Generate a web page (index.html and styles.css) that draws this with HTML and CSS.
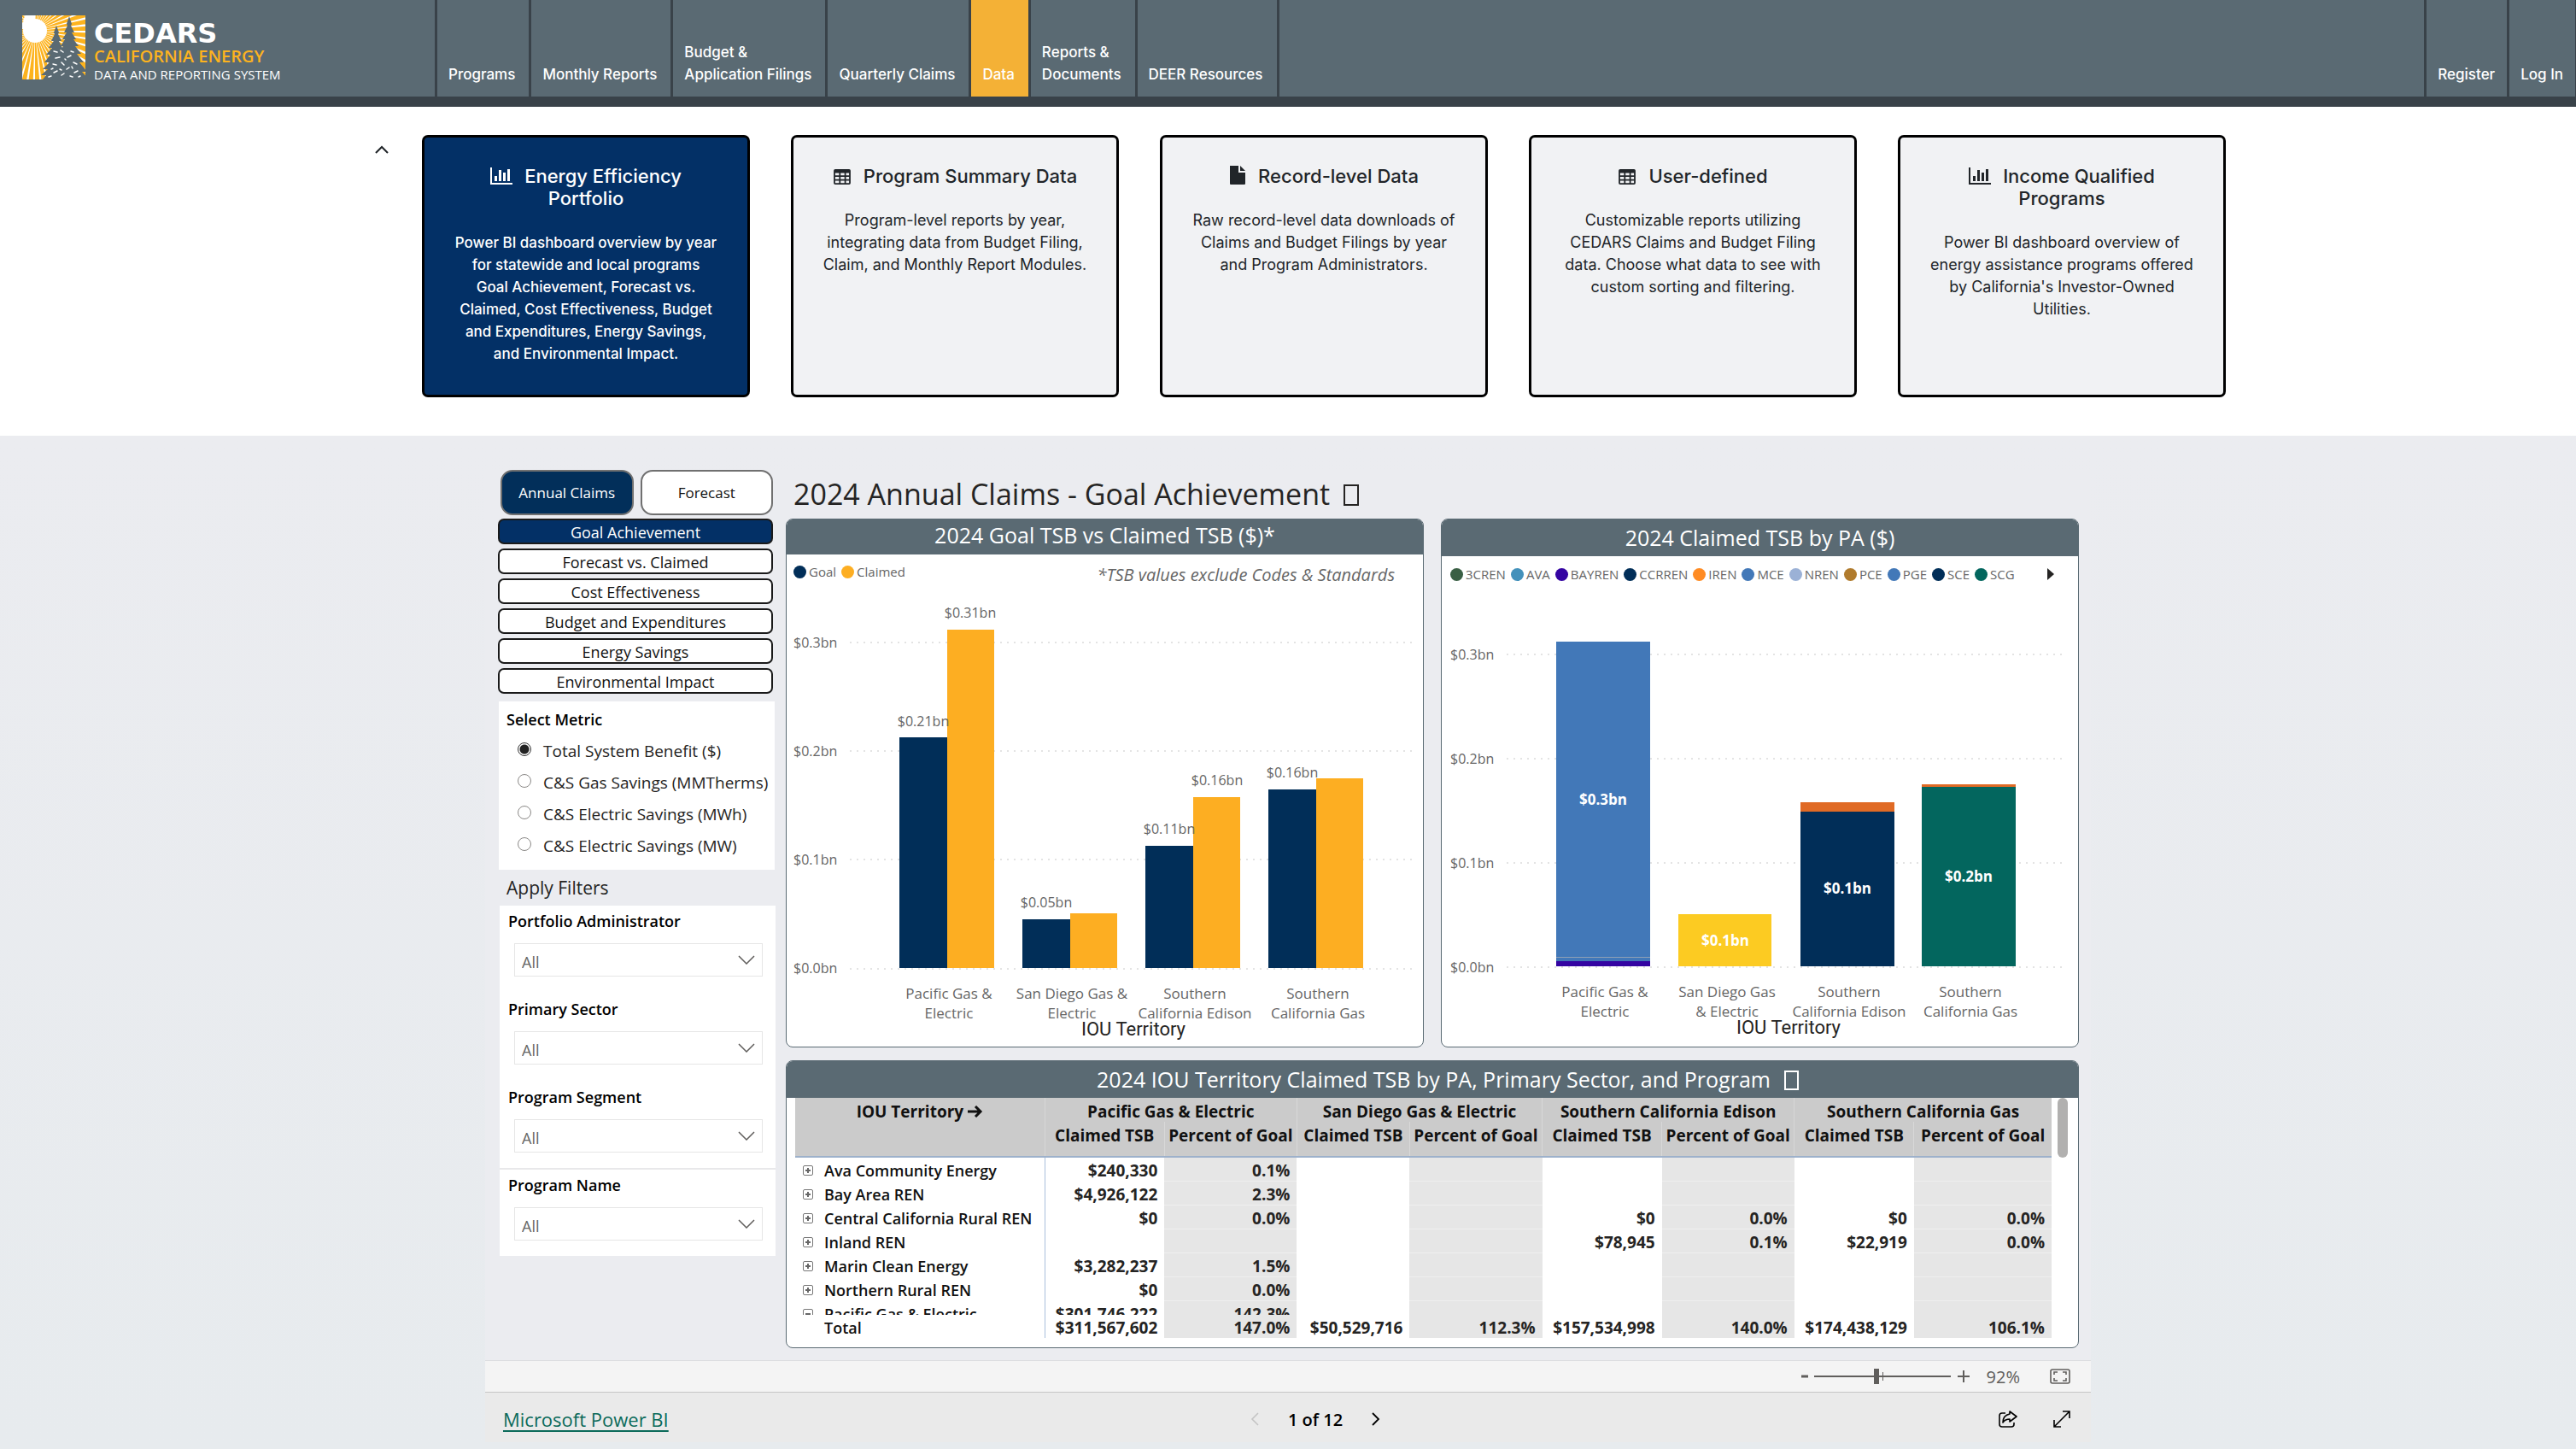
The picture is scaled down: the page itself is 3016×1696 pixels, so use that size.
FILE: index.html
```html
<!DOCTYPE html>
<html lang="en">
<head>
<meta charset="utf-8">
<meta name="viewport" content="width=device-width, initial-scale=1">
<title>CEDARS - Energy Efficiency Portfolio</title>
<link rel="stylesheet" href="styles.css">
</head>
<body>
<svg class="sprite" aria-hidden="true">
  <symbol id="i-bars" viewBox="0 0 26 20"><path d="M0 0h2v18h24v2H0z"/><path d="M5 10h3v6H5zM10 3h3v13h-3zM15 6h3v10h-3zM20 2h3v14h-3z"/></symbol>
  <symbol id="i-table" viewBox="0 0 22 20"><path fill-rule="evenodd" d="M2 0h18a2 2 0 0 1 2 2v16a2 2 0 0 1-2 2H2a2 2 0 0 1-2-2V2a2 2 0 0 1 2-2zM2 5v3h5V5zm7 0v3h5V5zm7 0v3h4V5zM2 10v3h5v-3zm7 0v3h5v-3zm7 0v3h4v-3zM2 15v3h5v-3zm7 0v3h5v-3zm7 0v3h4v-3z"/></symbol>
  <symbol id="i-file" viewBox="0 0 20 22"><path d="M1 0h10v8h8v13a1 1 0 0 1-1 1H2a1 1 0 0 1-1-1z"/><path d="M13 0l6 6h-6z"/></symbol>
</svg>

<header class="topbar">
  <a class="brand" href="#">
    <svg class="brand-mark" viewBox="0 0 74 75" aria-hidden="true">
      <defs><clipPath id="frame"><rect width="74" height="75"/></clipPath></defs>
      <g clip-path="url(#frame)">
        <rect width="74" height="75" fill="#fdb31e"/>
        <circle cx="15" cy="18" r="50" fill="none" stroke="#fff" stroke-width="100" pathLength="144" stroke-dasharray="0.9 2.1"/>
        <circle cx="15" cy="18" r="14" fill="#fff"/>
        <path fill="#5a6a73" d="M55 1l3 9-1 2 4 8-3 0 5 8-3 0 6 8-4 0 7 9-5 0 8 10-5 0 9 11-6 0 8 9H38l2-12 6-18-3 0 5-9-3 0 5-8-3 0 5-8-3 0 4-8-1-2z"/>
        <path fill="#5a6a73" d="M40 12l3 8-1 2 4 8-3 0 5 10-3 0 8 14v21H24l4-5-6 0 8-7-6 0 8-8-6 0 7-9-5 0 7-8-4 0 6-8-3 0 4-8-1-2z"/>
        <g fill="none" stroke="#fff" stroke-width="1.5" stroke-linecap="round">
          <path d="M37 42l4 1M45 41l3 2M39 50l5-1M36 57l4 1M46 55l3 3M57 42l3 1M53 49l4-2M60 55l4 2M52 63l3-2M37 67l4-2M46 70l3-2M61 67l4-2M31 72l3-1M56 71l3 1M66 72l2-1M44 63l2 1M58 60l1 2M50 51l1 1M34 63l2-1"/>
        </g>
      </g>
    </svg>
    <span class="brand-text">
      <span class="brand-name">CEDARS</span>
      <span class="brand-state">CALIFORNIA ENERGY</span>
      <span class="brand-sub">DATA AND REPORTING SYSTEM</span>
    </span>
  </a>
  <nav class="mainnav">
    <a href="#">Programs</a>
    <a href="#">Monthly Reports</a>
    <a href="#">Budget &amp;<br>Application Filings</a>
    <a href="#">Quarterly Claims</a>
    <a href="#" class="current">Data</a>
    <a href="#">Reports &amp;<br>Documents</a>
    <a href="#">DEER Resources</a>
  </nav>
  <nav class="mainnav account">
    <a href="#">Register</a>
    <a href="#">Log In</a>
  </nav>
</header>

<section class="chooser">
  <div class="chooser-inner">
    <button class="collapse" aria-label="Collapse"><svg width="16" height="10" viewBox="0 0 16 10"><path d="M1 9l7-7 7 7" fill="none" stroke="#212529" stroke-width="2"/></svg></button>
    <div class="cards">
      <a href="#" class="card active">
        <h2><svg width="26" height="20"><use href="#i-bars"/></svg>Energy Efficiency Portfolio</h2>
        <p>Power BI dashboard overview by year for statewide and local programs<br>Goal Achievement, Forecast vs. Claimed, Cost Effectiveness, Budget and Expenditures, Energy Savings, and Environmental Impact.</p>
      </a>
      <a href="#" class="card">
        <h2><svg width="22" height="18"><use href="#i-table"/></svg>Program Summary Data</h2>
        <p>Program-level reports by year, integrating data from Budget Filing, Claim, and Monthly Report Modules.</p>
      </a>
      <a href="#" class="card">
        <h2><svg width="20" height="22"><use href="#i-file"/></svg>Record-level Data</h2>
        <p>Raw record-level data downloads of Claims and Budget Filings by year and Program Administrators.</p>
      </a>
      <a href="#" class="card">
        <h2><svg width="22" height="18"><use href="#i-table"/></svg>User-defined</h2>
        <p>Customizable reports utilizing CEDARS Claims and Budget Filing data. Choose what data to see with custom sorting and filtering.</p>
      </a>
      <a href="#" class="card">
        <h2><svg width="26" height="20"><use href="#i-bars"/></svg>Income Qualified Programs</h2>
        <p>Power BI dashboard overview of energy assistance programs offered by California's Investor-Owned Utilities.</p>
      </a>
    </div>
  </div>
</section>

<main class="stage">
<div class="embed">
  <div class="report">
    <aside class="side">
      <div class="tabs">
        <button class="tab on">Annual Claims</button>
        <button class="tab">Forecast</button>
      </div>
      <div class="pages">
        <button class="page on">Goal Achievement</button>
        <button class="page">Forecast vs. Claimed</button>
        <button class="page">Cost Effectiveness</button>
        <button class="page">Budget and Expenditures</button>
        <button class="page">Energy Savings</button>
        <button class="page">Environmental Impact</button>
      </div>
      <fieldset class="metric">
        <legend>Select Metric</legend>
        <label><input type="radio" name="metric" checked>Total System Benefit ($)</label>
        <label><input type="radio" name="metric">C&amp;S Gas Savings (MMTherms)</label>
        <label><input type="radio" name="metric">C&amp;S Electric Savings (MWh)</label>
        <label><input type="radio" name="metric">C&amp;S Electric Savings (MW)</label>
      </fieldset>
      <h3 class="filters-title">Apply Filters</h3>
      <div class="filters">
        <div class="filter"><label for="f1">Portfolio Administrator</label><select id="f1"><option>All</option></select></div>
        <div class="filter"><label for="f2">Primary Sector</label><select id="f2"><option>All</option></select></div>
        <div class="filter"><label for="f3">Program Segment</label><select id="f3"><option>All</option></select></div>
        <div class="filter"><label for="f4">Program Name</label><select id="f4"><option>All</option></select></div>
      </div>
    </aside>

    <div class="content">
      <h1>2024 Annual Claims - Goal Achievement<span class="info"></span></h1>
      <div class="charts">
        <section class="panel">
          <h2 class="panel-title short">2024 Goal TSB vs Claimed TSB ($)*</h2>
          <div class="legend-row">
            <ul class="legend">
              <li><i class="navy"></i>Goal</li>
              <li><i class="amber"></i>Claimed</li>
            </ul>
            <em class="note">*TSB values exclude Codes &amp; Standards</em>
          </div>
          <svg class="chart" viewBox="0 0 745 525" role="img" aria-label="Goal and claimed TSB by territory">
            <g class="grid"><path d="M74 52H736M74 179H736M74 306H736M74 434H736"/></g>
            <g class="axis"><text x="8" y="58">$0.3bn</text><text x="8" y="185">$0.2bn</text><text x="8" y="312">$0.1bn</text><text x="8" y="439">$0.0bn</text></g>
            <g fill="#012e58"><rect x="132" y="163" width="56" height="270"/><rect x="276" y="376" width="56" height="57"/><rect x="420" y="290" width="56" height="143"/><rect x="564" y="224" width="56" height="209"/></g>
            <g fill="#fdae22"><rect x="188" y="37" width="55" height="396"/><rect x="332" y="369" width="55" height="64"/><rect x="476" y="233" width="55" height="200"/><rect x="620" y="211" width="55" height="222"/></g>
            <g class="axis mid">
              <text x="160" y="150">$0.21bn</text><text x="215" y="23">$0.31bn</text><text x="304" y="362">$0.05bn</text><text x="448" y="276">$0.11bn</text><text x="504" y="219">$0.16bn</text><text x="592" y="210">$0.16bn</text>
            </g>
            <g class="axis mid cats">
              <text x="190" y="469">Pacific Gas &amp;</text><text x="190" y="492">Electric</text>
              <text x="334" y="469">San Diego Gas &amp;</text><text x="334" y="492">Electric</text>
              <text x="478" y="469">Southern</text><text x="478" y="492">California Edison</text>
              <text x="622" y="469">Southern</text><text x="622" y="492">California Gas</text>
            </g>
            <text class="axis-title" x="406" y="512">IOU Territory</text>
          </svg>
        </section>

        <section class="panel">
          <h2 class="panel-title">2024 Claimed TSB by PA ($)</h2>
          <div class="legend-row tight">
            <ul class="legend">
              <li><i class="forest"></i>3CREN</li>
              <li><i class="sky"></i>AVA</li>
              <li><i class="violet"></i>BAYREN</li>
              <li><i class="navy"></i>CCRREN</li>
              <li><i class="orange"></i>IREN</li>
              <li><i class="blue"></i>MCE</li>
              <li><i class="mist"></i>NREN</li>
              <li><i class="bronze"></i>PCE</li>
              <li><i class="blue"></i>PGE</li>
              <li><i class="navy"></i>SCE</li>
              <li><i class="teal"></i>SCG</li>
            </ul>
            <button class="more" aria-label="More legend entries"><svg width="8" height="14" viewBox="0 0 8 14"><path d="M0 0l8 7-8 7z" fill="#252423"/></svg></button>
          </div>
          <svg class="chart" viewBox="0 0 745 525" role="img" aria-label="Claimed TSB by portfolio administrator">
            <g class="grid"><path d="M76 66H731M76 188H731M76 310H731M76 432H731"/></g>
            <g class="axis"><text x="10" y="72">$0.3bn</text><text x="10" y="194">$0.2bn</text><text x="10" y="316">$0.1bn</text><text x="10" y="438">$0.0bn</text></g>
            <rect x="134" y="51" width="110" height="380" fill="#4278b8"/>
            <rect x="134" y="420" width="110" height="1" fill="#8d9fb5"/>
            <rect x="134" y="425" width="110" height="6" fill="#3404a2"/>
            <rect x="277" y="370" width="109" height="61" fill="#fccb22"/>
            <rect x="420" y="239" width="110" height="11" fill="#e06a25"/>
            <rect x="420" y="250" width="110" height="181" fill="#012e58"/>
            <rect x="562" y="218" width="110" height="3" fill="#e06a25"/>
            <rect x="562" y="221" width="110" height="210" fill="#03665e"/>
            <g class="value"><text x="189" y="242">$0.3bn</text><text x="332" y="407">$0.1bn</text><text x="475" y="346">$0.1bn</text><text x="617" y="332">$0.2bn</text></g>
            <g class="axis mid cats">
              <text x="191" y="467">Pacific Gas &amp;</text><text x="191" y="490">Electric</text>
              <text x="334" y="467">San Diego Gas</text><text x="334" y="490">&amp; Electric</text>
              <text x="477" y="467">Southern</text><text x="477" y="490">California Edison</text>
              <text x="619" y="467">Southern</text><text x="619" y="490">California Gas</text>
            </g>
            <text class="axis-title" x="406" y="510">IOU Territory</text>
          </svg>
        </section>
      </div>

      <section class="panel table-panel">
        <h2 class="panel-title">2024 IOU Territory Claimed TSB by PA, Primary Sector, and Program<span class="info small"></span></h2>
        <div class="table-wrap">
          <table>
            <colgroup><col class="c-name"><col class="c-tsb"><col class="c-pct"><col class="c-tsb2"><col class="c-pct"><col class="c-tsb"><col class="c-pct"><col class="c-tsb"><col class="c-last"></colgroup>
            <thead>
              <tr><th scope="col">IOU Territory <svg width="18" height="14" viewBox="0 0 18 14"><path d="M0 7h15M9 1l6 6-6 6" fill="none" stroke="#111" stroke-width="3"/></svg></th><th colspan="2" scope="colgroup">Pacific Gas &amp; Electric</th><th colspan="2" scope="colgroup">San Diego Gas &amp; Electric</th><th colspan="2" scope="colgroup">Southern California Edison</th><th colspan="2" scope="colgroup">Southern California Gas</th></tr>
              <tr class="sub"><th></th><th>Claimed TSB</th><th>Percent of Goal</th><th>Claimed TSB</th><th>Percent of Goal</th><th>Claimed TSB</th><th>Percent of Goal</th><th>Claimed TSB</th><th>Percent of Goal</th></tr>
            </thead>
            <tbody>
              <tr><th scope="row"><button class="exp" aria-label="Expand"></button>Ava Community Energy</th><td>$240,330</td><td>0.1%</td><td></td><td></td><td></td><td></td><td></td><td></td></tr>
              <tr><th scope="row"><button class="exp" aria-label="Expand"></button>Bay Area REN</th><td>$4,926,122</td><td>2.3%</td><td></td><td></td><td></td><td></td><td></td><td></td></tr>
              <tr><th scope="row"><button class="exp" aria-label="Expand"></button>Central California Rural REN</th><td>$0</td><td>0.0%</td><td></td><td></td><td>$0</td><td>0.0%</td><td>$0</td><td>0.0%</td></tr>
              <tr><th scope="row"><button class="exp" aria-label="Expand"></button>Inland REN</th><td></td><td></td><td></td><td></td><td>$78,945</td><td>0.1%</td><td>$22,919</td><td>0.0%</td></tr>
              <tr><th scope="row"><button class="exp" aria-label="Expand"></button>Marin Clean Energy</th><td>$3,282,237</td><td>1.5%</td><td></td><td></td><td></td><td></td><td></td><td></td></tr>
              <tr><th scope="row"><button class="exp" aria-label="Expand"></button>Northern Rural REN</th><td>$0</td><td>0.0%</td><td></td><td></td><td></td><td></td><td></td><td></td></tr>
              <tr class="cut"><th scope="row"><div><button class="exp open" aria-label="Collapse"></button>Pacific Gas &amp; Electric</div></th><td><div>$301,746,222</div></td><td><div>142.3%</div></td><td></td><td></td><td></td><td></td><td></td><td></td></tr>
            </tbody>
            <tfoot>
              <tr><th scope="row">Total</th><td>$311,567,602</td><td>147.0%</td><td>$50,529,716</td><td>112.3%</td><td>$157,534,998</td><td>140.0%</td><td>$174,438,129</td><td>106.1%</td></tr>
            </tfoot>
          </table>
          <div class="scroll-thumb"></div>
        </div>
      </section>
    </div>
  </div>

  <div class="zoombar">
    <button class="step" aria-label="Zoom out"><svg width="10" height="16" viewBox="0 0 10 16"><path d="M1 8h8" stroke="#605e5c" stroke-width="3"/></svg></button>
    <input type="range" min="10" max="177" value="86" aria-label="Zoom">
    <button class="step" aria-label="Zoom in"><svg width="14" height="16" viewBox="0 0 14 16"><path d="M0 8h14M7 1v14" stroke="#605e5c" stroke-width="2"/></svg></button>
    <span class="percent">92%</span>
    <button class="step" aria-label="Fit to page"><svg width="24" height="18" viewBox="0 0 24 18" fill="none" stroke="#605e5c"><rect x="1" y="1" width="22" height="16" rx="2" stroke-width="1.6"/><path d="M5 7V4h4M15 4h4v3M19 11v3h-4M9 14H5v-3" stroke-width="1.6"/></svg></button>
  </div>

  <footer class="embed-foot">
    <a class="pbi" href="#">Microsoft Power BI</a>
    <div class="pager">
      <button aria-label="Previous page" disabled><svg width="10" height="16" viewBox="0 0 10 16"><path d="M9 1L2 8l7 7" fill="none" stroke="#c4c4c4" stroke-width="1.6"/></svg></button>
      <span>1 of 12</span>
      <button aria-label="Next page"><svg width="10" height="16" viewBox="0 0 10 16"><path d="M1 1l7 7-7 7" fill="none" stroke="#000" stroke-width="1.8"/></svg></button>
    </div>
    <div class="tools">
      <button aria-label="Share"><svg width="22" height="20" viewBox="0 0 22 20" fill="none" stroke="#000" stroke-width="1.6" stroke-linejoin="round"><path d="M8 3H4a3 3 0 0 0-3 3v10a3 3 0 0 0 3 3h11a3 3 0 0 0 3-3v-2"/><path d="M13 1l8 6-8 6v-3c-4 0-6 1-8 4 0-6 3-9 8-10z"/></svg></button>
      <button aria-label="Full screen"><svg width="20" height="20" viewBox="0 0 20 20" fill="none" stroke="#000" stroke-width="1.6"><path d="M1 19L19 1M11 1h8v8M1 11v8h8"/></svg></button>
    </div>
  </footer>
</div>
</main>
</body>
</html>
```
FILE: styles.css
```css
* { box-sizing: border-box; }

body {
  margin: 0;
  min-height: 100vh;
  display: flex;
  flex-direction: column;
  font-family: Inter, "Liberation Sans", sans-serif;
  color: #212529;
  background: #fff;
}

h1, h2, h3, p, ul, fieldset { margin: 0; padding: 0; border: 0; }
ul { list-style: none; }
a { color: inherit; text-decoration: none; }
button { margin: 0; padding: 0; border: 0; background: none; font: inherit; color: inherit; }
.sprite { display: none; }

/* Header */
.topbar {
  display: flex;
  height: 125px;
  background: #5a6a73;
  border-bottom: 12px solid #394249;
  color: #fff;
}
.brand { display: flex; width: 509px; padding: 18px 0 0 26px; gap: 10px; }
.brand-mark { width: 74px; height: 75px; flex: none; }
.brand-text {
  display: flex;
  flex-direction: column;
  padding-top: 5px;
  font-family: "Open Sans", sans-serif;
  white-space: nowrap;
}
.brand-name { font: bold 32px/32px "DejaVu Sans", sans-serif; }
.brand-state { font-size: 20px; line-height: 22px; font-weight: 600; color: #fdb31e; }
.brand-sub { font-size: 15px; line-height: 20px; }

.mainnav { display: flex; border-right: 3px solid #394249; font-size: 17px; line-height: 26px; font-weight: 500; }
.mainnav a {
  display: flex;
  align-items: flex-end;
  padding: 0 16px 13px 13px;
  border-left: 3px solid #394249;
  white-space: nowrap;
}
.mainnav .current { background: #f4b136; }
.account { margin-left: auto; border-right-width: 1px; }
.account a { padding-right: 14px; }

/* Dashboard chooser */
.chooser { padding: 33px 24px 45px; }
.chooser-inner { display: flex; max-width: 2196px; margin: 0 auto; }
.collapse { align-self: flex-start; flex: none; width: 84px; height: 34px; padding-left: 29px; }
.collapse svg { display: block; }
.cards { flex: 1; display: grid; grid-template-columns: repeat(5, 1fr); gap: 48px; }
.card {
  min-height: 307px;
  padding: 32px;
  border: 3px solid #000;
  border-radius: 7px;
  background: #f1f2f4;
  text-align: center;
}
.card h2 { font-size: 22px; line-height: 26px; font-weight: 500; }
.card h2 svg { margin-right: 14px; fill: currentColor; vertical-align: -2px; }
.card p { margin-top: 26px; font-size: 18px; line-height: 26px; }
.card.active { background: #033066; color: #fff; }
.card.active p { font-size: 17px; font-weight: 500; }

/* Embedded report */
.stage {
  flex: 1;
  padding: 40px 24px 8px;
  background: linear-gradient(#ebecf0, #e7ebee);
  font-family: "Open Sans", "Noto Sans", sans-serif;
  color: #252423;
}
.embed { max-width: 1880px; margin: 0 auto; }
.report {
  display: grid;
  grid-template-columns: 325px 1fr;
  gap: 12px;
  padding: 0 14px 14px 15px;
  background: #ebecf0;
}

.tabs { display: flex; gap: 8px; padding: 0 3px; }
.tab {
  flex: 1;
  height: 53px;
  border: 2px solid #707070;
  border-radius: 14px;
  background: #fff;
  color: #111;
  font-size: 17px;
}
.tab.on { background: #022f5a; color: #fff; }
.pages { display: flex; flex-direction: column; gap: 5px; padding: 4px 3px 0 0; }
.page {
  height: 30px;
  padding-top: 3px;
  border: 2px solid #1a1a1a;
  border-radius: 7px;
  background: #fff;
  color: #111;
  font-size: 18px;
  line-height: 23px;
}
.page.on { background: #033066; color: #fff; }

.metric { margin: 9px 1px 0; padding: 3px 0 10px 9px; background: #fff; }
.metric legend { float: left; width: 100%; padding: 0; font-size: 18px; line-height: 36px; font-weight: 600; color: #000; }
.metric label { display: flex; clear: both; align-items: center; gap: 14px; padding-left: 13px; height: 37px; font-size: 19px; white-space: nowrap; }
.metric input {
  appearance: none;
  width: 16px;
  height: 16px;
  margin: 0 0 4px;
  border: 1px solid #8a8886;
  border-radius: 50%;
  background: #fff;
}
.metric input:checked { border-color: #333; background: radial-gradient(circle, #222 5px, #fff 6px); }

.filters-title { padding-left: 10px; font-size: 21px; line-height: 42px; font-weight: 400; }
.filters { margin-left: 2px; background: #fff; }
.filter { height: 103px; padding: 0 15px 0 10px; }
.filter:nth-child(3) { height: 101px; }
.filter:last-child { border-top: 2px solid #e8e8ea; }
.filter label { display: block; margin-bottom: 8px; font-size: 18px; line-height: 36px; font-weight: 600; color: #000; }
.filter select {
  appearance: none;
  display: block;
  width: calc(100% - 7px);
  height: 39px;
  margin-left: 7px;
  padding: 4px 8px 0;
  border: 1px solid #e6e6e6;
  border-radius: 0;
  background: #fff url("data:image/svg+xml,%3Csvg xmlns='http://www.w3.org/2000/svg' width='20' height='11' fill='none' stroke='%23605e5c' stroke-width='1.5'%3E%3Cpath d='M1 1l9 9 9-9'/%3E%3C/svg%3E") no-repeat right 8px center;
  font: 18px "Open Sans", sans-serif;
  color: #666;
}

.content h1 { padding-left: 9px; margin-bottom: 1px; font-size: 34px; line-height: 56px; font-weight: 400; }
.info { display: inline-block; width: 18px; height: 25px; margin-left: 16px; border: 2px solid currentColor; vertical-align: -1px; }
.info.small { width: 17px; height: 23px; vertical-align: -3px; }

.charts { display: grid; grid-template-columns: 1fr 1fr; gap: 20px; margin-bottom: 15px; }
.panel { border: 1px solid #5a6a73; border-radius: 8px; background: #fff; overflow: hidden; }
.panel-title { background: #5a6a73; color: #fff; font-size: 25px; line-height: 43px; font-weight: 400; text-align: center; }
.panel-title.short { line-height: 37px; padding-bottom: 4px; }
.table-panel .panel-title { padding-left: 36px; }

.legend-row { display: flex; justify-content: space-between; height: 51px; padding: 8px 33px 0 8px; line-height: 24px; }
.legend-row.tight { height: 49px; padding: 9px 28px 0 10px; }
.legend { display: flex; gap: 6px; font-size: 15px; color: #666; }
.legend li { display: flex; align-items: center; height: 24px; gap: 3px; }
.legend i { width: 15px; height: 15px; border-radius: 50%; }
.navy { background: #012e58; }
.amber { background: #fdae22; }
.forest { background: #3a5f44; }
.sky { background: #4391bb; }
.violet { background: #3404a2; }
.orange { background: #ff8b22; }
.blue { background: #4278b8; }
.mist { background: #9bb1d6; }
.bronze { background: #b07b2d; }
.teal { background: #03665e; }
.note { padding-top: 4px; font-size: 20px; color: #666; }
.more { height: 24px; }
.more svg { display: block; }

.chart { display: block; width: 100%; }
.grid path { stroke: #c8c8c8; stroke-width: 1; stroke-dasharray: 2 6; }
.axis { font-size: 16px; fill: #666; }
.cats { font-size: 17px; }
.mid text, .value text, .axis-title { text-anchor: middle; }
.value { font-size: 17px; font-weight: 700; fill: #fff; }
.axis-title { font: 22px Roboto, sans-serif; fill: #252423; }

.table-wrap { display: flex; align-items: flex-start; gap: 7px; padding: 0 12px 11px 10px; }
table { flex: 1; border-collapse: collapse; table-layout: fixed; font-size: 19px; }
.c-name { width: 292px; }
.c-tsb { width: 140px; }
.c-tsb2 { width: 132px; }
.c-pct { width: 155px; }
.c-last { width: 161px; }
th, td { padding: 0; white-space: nowrap; font-weight: 700; }
thead th { height: 28px; padding-top: 4px; line-height: 24px; background: #cbcbcb; color: #111; border-left: 1px solid #d8d8d8; }
thead th:first-child { border-left: 0; }
thead .sub th { height: 41px; vertical-align: top; border-bottom: 2px solid #9db1cb; }
tbody th, tbody td, tfoot th, tfoot td { height: 28px; padding: 3px 8px 0 0; line-height: 25px; text-align: right; }
tbody th, tfoot th { padding-left: 34px; text-align: left; border-right: 1px solid #a9bfdc; color: #111; font-size: 18px; font-weight: 600; }
tfoot th, tfoot td { height: 27px; line-height: 24px; }
td:nth-child(odd) { background: #e6e6e6; }
tbody td:nth-child(odd) { box-shadow: inset 0 -1px #efefef; }
tbody .cut th, tbody .cut td { height: 16px; padding-top: 0; box-shadow: none; }
.cut div { height: 16px; padding-top: 3px; overflow: hidden; }
.cut th div { margin-left: -34px; padding-left: 34px; }
.exp {
  width: 12px;
  height: 12px;
  margin: 0 13px 0 -25px;
  border: 1px solid #777;
  border-radius: 2px;
  background:
    linear-gradient(#666, #666) center / 6px 2px no-repeat,
    linear-gradient(#666, #666) center / 2px 6px no-repeat;
  vertical-align: 2px;
}
.exp.open { background: linear-gradient(#666, #666) center / 6px 2px no-repeat; }
.scroll-thumb { width: 12px; height: 70px; border-radius: 6px; background: #b1b0af; }

/* Embed status bars */
.zoombar {
  display: flex;
  align-items: center;
  justify-content: flex-end;
  height: 38px;
  padding-right: 24px;
  border-top: 1px solid #dcdde0;
  border-bottom: 1px solid #c6c6c6;
  background: #f4f4f4;
  color: #605e5c;
}
.step svg { display: block; }
.zoombar input { appearance: none; width: 160px; height: 18px; margin: 0 8px 0 6px; background: linear-gradient(#605e5c, #605e5c) center / 100% 2px no-repeat, linear-gradient(#605e5c, #605e5c) 80px center / 1px 10px no-repeat; }
.zoombar input::-webkit-slider-thumb { appearance: none; width: 6px; height: 18px; background: #605e5c; }
.percent { margin: 0 35px 0 20px; font-size: 20px; }

.embed-foot {
  display: grid;
  grid-template-columns: 1fr auto 1fr;
  align-items: center;
  height: 58px;
  padding: 4px 24px 0 21px;
  background: #eaeaea;
}
.pbi { justify-self: start; font-size: 22px; color: #0b6a5a; text-decoration: underline; text-decoration-thickness: 2px; text-underline-offset: 4px; }
.pager { display: flex; align-items: center; gap: 34px; padding-left: 67px; font-size: 20px; font-weight: 600; color: #000; }
.tools { display: flex; justify-content: flex-end; gap: 42px; }
.pager svg, .tools svg { display: block; }
```
